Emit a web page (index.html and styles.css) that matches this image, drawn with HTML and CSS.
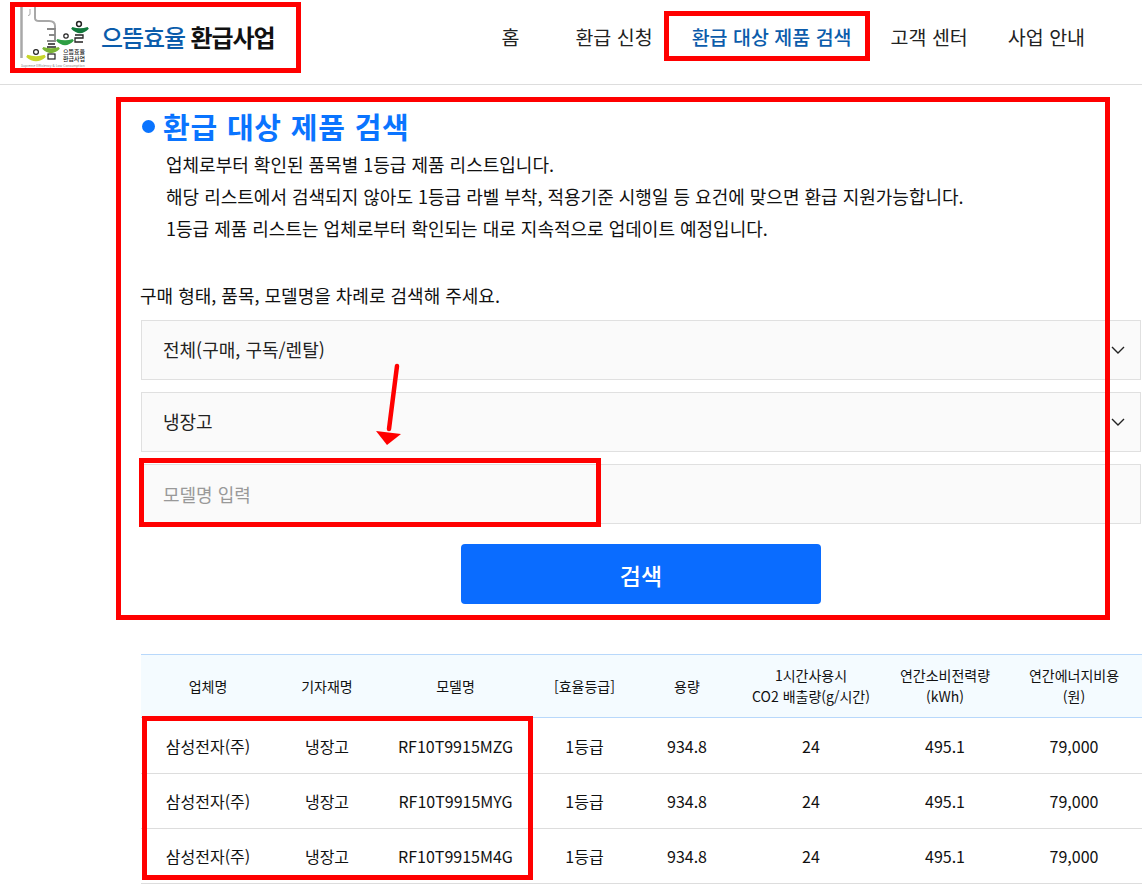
FILE: index.html
```html
<!DOCTYPE html>
<html lang="ko">
<head>
<meta charset="utf-8">
<title>환급 대상 제품 검색</title>
<link rel="stylesheet" href="styles.css">
</head>
<body>
<header class="site-header">
  <a class="logo">
    <span class="logo-mark">
      <svg width="72" height="62" viewBox="0 0 72 62">
        <path d="M1.5 1V52" stroke="#a8a8a8" stroke-width="2.5" fill="none"/>
        <path d="M15 1V12Q15 15 19 15H29Q35 15 35 20V23" stroke="#a8a8a8" stroke-width="2" fill="none"/>
        <path d="M10 3V8Q10 9.5 8 9.5" stroke="#a8a8a8" stroke-width="1" fill="none"/>
        <path d="M27 23H35V29H29M35 29V35H27" stroke="#888" stroke-width="1.8" fill="none"/>
        <path d="M28 38H35M27 41H36" stroke="#222" stroke-width="1.3"/>
        <circle cx="16" cy="46" r="2.4" stroke="#222" stroke-width="1.2" fill="none"/>
        <path d="M7 50Q16 58 25 50Q16 53 7 50Z" fill="#c8d62b" stroke="#c8d62b" stroke-width="2.4"/>
        <path d="M23 42Q31 50 39 42Q31 45 23 42Z" fill="#7ab535" stroke="#7ab535" stroke-width="2.4"/>
        <rect x="28" y="48" width="7" height="5" stroke="#222" stroke-width="1.2" fill="none"/>
        <circle cx="46" cy="30" r="2.2" stroke="#222" stroke-width="1.2" fill="none"/>
        <path d="M37 34Q45 42 53 34Q45 37 37 34Z" fill="#2e9e43" stroke="#2e9e43" stroke-width="2.4"/>
        <circle cx="59" cy="18" r="2.4" stroke="#222" stroke-width="1.5" fill="none"/>
        <path d="M52 22Q60 30 68 22Q60 25 52 22Z" fill="#12793c" stroke="#12793c" stroke-width="2.4"/>
        <path d="M55 29H63V32H55V36H63" stroke="#222" stroke-width="1.3" fill="none"/>
      </svg>
      <span class="logo-mini">으뜸효율<br>환급사업</span>
      <span class="logo-tiny">Supreme Efficiency &amp; Low Consumption</span>
    </span>
    <span class="logo-text"><b class="logo-blue">으뜸효율</b> 환급사업</span>
  </a>
  <nav class="nav">
    <a class="nav-item nav-home">홈</a>
    <a class="nav-item nav-apply">환급 신청</a>
    <a class="nav-item nav-active">환급 대상 제품 검색</a>
    <a class="nav-item nav-center">고객 센터</a>
    <a class="nav-item">사업 안내</a>
  </nav>
</header>

<main class="content">
  <h1 class="title"><span class="dot"></span>환급 대상 제품 검색</h1>
  <div class="intro">
    <p>업체로부터 확인된 품목별 1등급 제품 리스트입니다.</p>
    <p>해당 리스트에서 검색되지 않아도 1등급 라벨 부착, 적용기준 시행일 등 요건에 맞으면 환급 지원가능합니다.</p>
    <p>1등급 제품 리스트는 업체로부터 확인되는 대로 지속적으로 업데이트 예정입니다.</p>
  </div>
  <p class="guide">구매 형태, 품목, 모델명을 차례로 검색해 주세요.</p>
  <form class="search-form">
    <div class="field select">전체(구매, 구독/렌탈)
      <svg class="chev" width="14" height="8" viewBox="0 0 14 8"><path d="M1 1l6 6 6-6" fill="none" stroke="#222" stroke-width="1.4"/></svg>
    </div>
    <div class="field select">냉장고
      <svg class="chev" width="14" height="8" viewBox="0 0 14 8"><path d="M1 1l6 6 6-6" fill="none" stroke="#222" stroke-width="1.4"/></svg>
    </div>
    <div class="field placeholder">모델명 입력</div>
    <button class="search-btn" type="button">검색</button>
  </form>

  <table class="result">
    <colgroup>
      <col class="c1"><col class="c2"><col class="c3"><col class="c4"><col class="c5"><col class="c6"><col class="c7"><col class="c8">
    </colgroup>
    <thead>
      <tr><th>업체명</th><th>기자재명</th><th>모델명</th><th>[효율등급]</th><th>용량</th><th>1시간사용시<br>CO2 배출량(g/시간)</th><th>연간소비전력량<br>(kWh)</th><th>연간에너지비용<br>(원)</th></tr>
    </thead>
    <tbody>
      <tr><td>삼성전자(주)</td><td>냉장고</td><td>RF10T9915MZG</td><td>1등급</td><td>934.8</td><td>24</td><td>495.1</td><td>79,000</td></tr>
      <tr><td>삼성전자(주)</td><td>냉장고</td><td>RF10T9915MYG</td><td>1등급</td><td>934.8</td><td>24</td><td>495.1</td><td>79,000</td></tr>
      <tr><td>삼성전자(주)</td><td>냉장고</td><td>RF10T9915M4G</td><td>1등급</td><td>934.8</td><td>24</td><td>495.1</td><td>79,000</td></tr>
    </tbody>
  </table>
</main>

<div class="mark mark-logo"></div>
<div class="mark mark-nav"></div>
<div class="mark mark-search"></div>
<div class="mark mark-input"></div>
<div class="mark mark-rows"></div>
<svg class="arrow" width="30" height="84" viewBox="0 0 30 84"><path d="M22 3L14 66" stroke="#f00" stroke-width="4.5" stroke-linecap="round" fill="none"/><path d="M1 68L26 71L12 82Z" fill="#f00"/></svg>
</body>
</html>
```

FILE: styles.css
```css
* { box-sizing: border-box; }
html, body { margin: 0; padding: 0; }
body {
  position: relative;
  width: 1142px;
  height: 884px;
  overflow: hidden;
  background: #fff;
  color: #111;
  font-family: "Noto Sans CJK KR", "Noto Sans", sans-serif;
}
.site-header {
  display: flex;
  align-items: center;
  height: 85px;
  border-bottom: 1px solid #ddd;
}
.logo { display: flex; align-items: center; margin-left: 20px; margin-top: -10px; }
.logo-mark { position: relative; display: block; width: 72px; height: 62px; }
.logo-mark svg { display: block; }
.logo-mini {
  position: absolute; left: 43px; top: 42px;
  font-size: 6px; line-height: 7px; font-weight: 500; color: #222; white-space: nowrap;
}
.logo-tiny {
  position: absolute; left: 1px; top: 57px;
  font-size: 3.4px; line-height: 5px; color: #888; white-space: nowrap;
}
.logo-text { margin-left: 9px; font-size: 24px; line-height: 32px; font-weight: 700; letter-spacing: -1.1px; color: #111; white-space: nowrap; }
.logo-blue { color: #0b5cab; font-weight: 500; }
.nav { display: flex; align-items: center; margin-left: 227px; margin-top: -10px; }
.nav-item { font-size: 19.5px; line-height: 28px; color: #222; white-space: nowrap; }
.nav-home { margin-right: 56px; }
.nav-apply { margin-right: 39px; }
.nav-active { color: #0b5cab; font-weight: 500; margin-right: 39px; }
.nav-center { margin-right: 40px; }

.content { padding-left: 141px; }
.title {
  display: flex; align-items: center;
  margin: 23px 0 0 1px;
  height: 36px;
  font-size: 29px; line-height: 36px; font-weight: 700; letter-spacing: 0.8px;
  color: #0a74ff;
}
.dot { width: 13px; height: 13px; border-radius: 50%; background: #0a74ff; margin-right: 8px; margin-top: 1px; }
.intro { margin: 4px 0 0 25px; }
.intro p { margin: 0; font-size: 18px; line-height: 32px; height: 32px; color: #111; white-space: nowrap; }
.guide { margin: 35px 0 0 -1px; font-size: 18px; line-height: 32px; height: 32px; color: #111; }
.search-form { display: flex; flex-direction: column; width: 1000px; margin-top: 9px; }
.field {
  display: flex; align-items: center; position: relative;
  height: 60px; margin-bottom: 12px; padding-left: 21px;
  background: #fafafa; border: 1px solid #e0e0e0;
  font-size: 18px; color: #222;
}
.select { padding-bottom: 2px; }
.placeholder { color: #999; margin-bottom: 0; }
.chev { position: absolute; right: 15px; top: 25px; }
.search-btn {
  display: block; width: 360px; height: 60px; margin: 20px auto 0; padding-top: 2px;
  border: 0; border-radius: 4px;
  background: #0a6cff; color: #fff;
  font-family: inherit; font-size: 23px; font-weight: 500;
}
.result { width: 1002px; margin-top: 50px; border-collapse: collapse; table-layout: fixed; }
.c1 { width: 134px; } .c2 { width: 104px; } .c3 { width: 153px; } .c4 { width: 105px; }
.c5 { width: 100px; } .c6 { width: 148px; } .c7 { width: 120px; } .c8 { width: 138px; }
.result th {
  height: 63px; padding: 0;
  background: #f4fbff;
  border-top: 1px solid #b8d8fb; border-bottom: 1px solid #b8d8fb;
  font-size: 14px; line-height: 21px; font-weight: 400; color: #111;
}
.result td {
  height: 55px; padding: 0; text-align: center;
  border-bottom: 1px solid #ddd;
  font-size: 16px; color: #111;
}
.result tbody tr:first-child td { height: 56px; padding-top: 1px; }

.mark { position: absolute; border: 5px solid #f00; pointer-events: none; }
.mark-logo { left: 10px; top: 2px; width: 291px; height: 71px; }
.mark-nav { left: 664px; top: 11px; width: 206px; height: 50px; }
.mark-search { left: 116px; top: 97px; width: 994px; height: 523px; }
.mark-input { left: 139px; top: 458px; width: 462px; height: 69px; }
.mark-rows { left: 142px; top: 716px; width: 391px; height: 164px; }
.arrow { position: absolute; left: 375px; top: 363px; }
```
